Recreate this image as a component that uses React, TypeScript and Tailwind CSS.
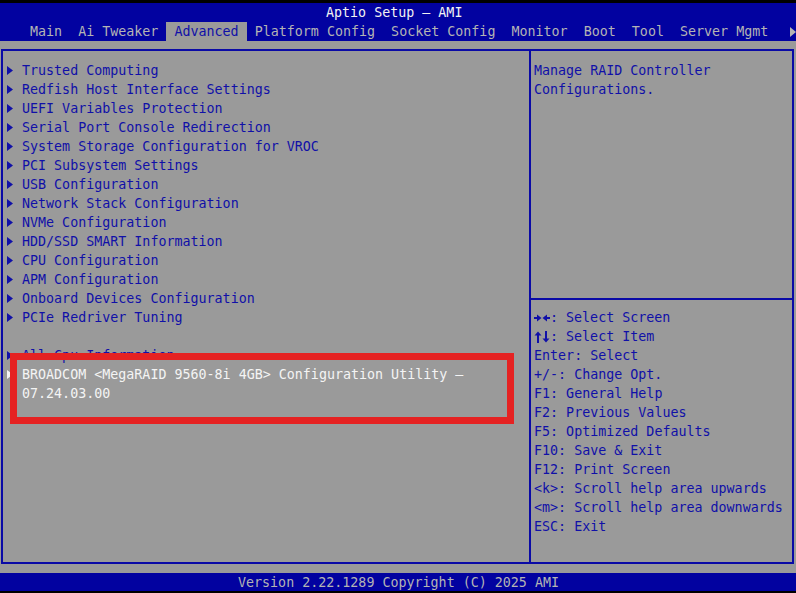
import React from "react";

const menuItems = [
  "Trusted Computing",
  "Redfish Host Interface Settings",
  "UEFI Variables Protection",
  "Serial Port Console Redirection",
  "System Storage Configuration for VROC",
  "PCI Subsystem Settings",
  "USB Configuration",
  "Network Stack Configuration",
  "NVMe Configuration",
  "HDD/SSD SMART Information",
  "CPU Configuration",
  "APM Configuration",
  "Onboard Devices Configuration",
  "PCIe Redriver Tuning",
];

const keyHelp: [string, string][] = [
  ["Enter", ": Select"],
  ["+/-", ": Change Opt."],
  ["F1", ": General Help"],
  ["F2", ": Previous Values"],
  ["F5", ": Optimized Defaults"],
  ["F10", ": Save & Exit"],
  ["F12", ": Print Screen"],
  ["<k>", ": Scroll help area upwards"],
  ["<m>", ": Scroll help area downwards"],
  ["ESC", ": Exit"],
];

const INK = "#1010a8";

function Pointer({ color }: { color: string }) {
  return (
    <svg width="6" height="9" viewBox="0 0 6 9" className="block">
      <polygon points="0,0 6,4.5 0,9" fill={color} />
    </svg>
  );
}

/* right + left arrows sharing a two-cell slot */
function ScreenArrows() {
  return (
    <svg width="16" height="8" viewBox="0 0 16 8" className="block" aria-label="→←">
      <rect x="0" y="3" width="4" height="2" fill={INK} />
      <polygon points="3,0.5 7.5,4 3,7.5" fill={INK} />
      <rect x="12" y="3" width="4" height="2" fill={INK} />
      <polygon points="13,0.5 8.5,4 13,7.5" fill={INK} />
    </svg>
  );
}

/* up + down arrows sharing a two-cell slot */
function ItemArrows() {
  return (
    <svg width="16" height="12" viewBox="0 0 16 12" className="block" aria-label="↑↓">
      <polygon points="0.5,4.5 4,0.5 7.5,4.5" fill={INK} />
      <rect x="3" y="4" width="2" height="8" fill={INK} />
      <rect x="11" y="0" width="2" height="8" fill={INK} />
      <polygon points="8.5,7.5 12,11.5 15.5,7.5" fill={INK} />
    </svg>
  );
}

function MenuRow({
  text,
  arrow,
  selected,
}: {
  text: string;
  arrow?: boolean;
  selected?: boolean;
}) {
  return (
    <div className="flex h-[19px] items-center pt-[1px]">
      <div className="flex w-[16px] items-center pl-[1px]">
        {arrow ? <Pointer color={selected ? "#f4f4f4" : INK} /> : null}
      </div>
      <span
        className={
          "whitespace-pre " + (selected ? "text-[#f4f4f4]" : "text-[#1010a8]")
        }
      >
        {text}
      </span>
    </div>
  );
}

export default function App() {
  return (
    <div
      className="relative flex h-[593px] w-[796px] flex-col overflow-hidden bg-black pt-[3px] text-[13.33px] leading-[19px]"
      style={{ fontFamily: '"DejaVu Sans Mono", "Liberation Mono", monospace' }}
    >
      {/* title + tab strip */}
      <header className="flex h-[38px] flex-col bg-[#0202a0]">
        <div className="h-[19px] whitespace-pre pl-[326px] text-[#f2f2f2]">
          Aptio Setup – AMI
        </div>
        <div className="flex h-[19px] items-center pl-[30px] text-[#b4b4b4]">
          <span className="whitespace-pre">Main  Ai Tweaker </span>
          <span className="whitespace-pre bg-[#9a9a9a] text-[#1010a8]">
            {" Advanced "}
          </span>
          <span className="whitespace-pre">
            {" Platform Config  Socket Config  Monitor  Boot  Tool  Server Mgmt"}
          </span>
          <div className="ml-auto">
            <svg width="6" height="10" viewBox="0 0 6 10" className="block">
              <polygon points="0,0 6,5 0,10" fill="#b4b4b4" />
            </svg>
          </div>
        </div>
      </header>

      {/* main setup area */}
      <main className="flex h-[532px] flex-col bg-[#9a9a9a] pb-[9px] pl-[1px] pr-[2px] pt-[8px]">
        <div className="flex flex-1 border-2 border-[#0a0aa6]">
          {/* left: menu */}
          <section className="flex w-[526px] flex-col pl-[3px] pt-[9px]">
            {menuItems.map((t) => (
              <MenuRow key={t} text={t} arrow />
            ))}
            <div className="h-[19px]" />
            <MenuRow text="All Cpu Information" arrow />
            <MenuRow
              text="BROADCOM <MegaRAID 9560-8i 4GB> Configuration Utility –"
              arrow
              selected
            />
            <MenuRow text="07.24.03.00" selected />
          </section>

          <div className="w-[2px] bg-[#0a0aa6]" />

          {/* right: help */}
          <section className="flex flex-1 flex-col text-[#1010a8]">
            <div className="h-[247px] pl-[3px] pt-[10px]">
              <div className="h-[19px]">Manage RAID Controller</div>
              <div className="h-[19px]">Configurations.</div>
            </div>
            <div className="h-[2px] bg-[#0a0aa6]" />
            <div className="flex flex-col pl-[3px] pt-[8px]">
              <div className="flex h-[19px] items-center whitespace-pre">
                <ScreenArrows />
                <span>: Select Screen</span>
              </div>
              <div className="flex h-[19px] items-center whitespace-pre">
                <ItemArrows />
                <span>: Select Item</span>
              </div>
              {keyHelp.map(([k, rest]) => (
                <div key={k} className="h-[19px] whitespace-pre">
                  {k}
                  {rest}
                </div>
              ))}
            </div>
          </section>
        </div>
      </main>

      {/* footer */}
      <footer className="h-[18px] whitespace-pre bg-[#0202a0] pl-[238px] leading-[19px] text-[#b4b4b4]">
        Version 2.22.1289 Copyright (C) 2025 AMI
      </footer>

      {/* red marker around the selected entry */}
      <div className="pointer-events-none absolute left-[10px] top-[353px] h-[71px] w-[504px] border-[7px] border-[#e52222]" />
    </div>
  );
}
